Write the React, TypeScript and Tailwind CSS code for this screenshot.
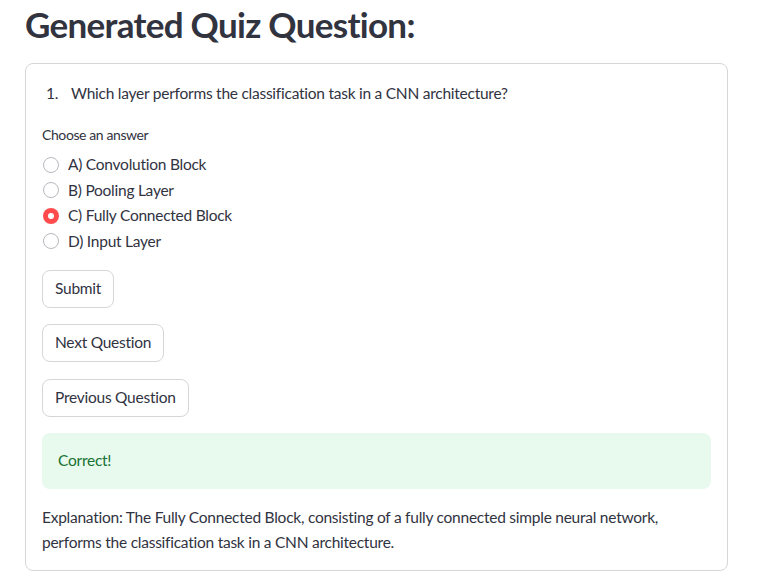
import React from "react";

const options = [
  "A) Convolution Block",
  "B) Pooling Layer",
  "C) Fully Connected Block",
  "D) Input Layer",
];

function Radio({ checked }: { checked: boolean }) {
  if (checked) {
    return (
      <span className="flex h-4 w-4 items-center justify-center rounded-full bg-[#ff4b4b]">
        <span className="h-[6px] w-[6px] rounded-full bg-white" />
      </span>
    );
  }
  return <span className="h-4 w-4 rounded-full border border-[#b8b9be] bg-white" />;
}

function Btn({ children }: { children: React.ReactNode }) {
  return (
    <button className="flex h-[38px] items-center rounded-lg border border-[#d6d6d9] bg-white px-3 text-[15.5px] tracking-[-0.25px] text-[#31333f]">
      {children}
    </button>
  );
}

export default function App() {
  return (
    <div
      className="min-h-[582px] w-[776px] bg-white text-[#31333f]"
      style={{ fontFamily: "Lato, 'Noto Sans', sans-serif" }}
    >
      <div className="pl-[25px] pr-[48px] pt-[1px]">
        <h1 className="h-[62px] text-[35px] font-bold leading-[46px] tracking-[-0.7px]">
          Generated Quiz Question:
        </h1>
        <div className="rounded-lg border border-[#d6d6d9] px-[16px] pb-[15px] pt-[17px]">
          <div className="flex text-[15.5px] leading-[24px] tracking-[-0.25px]">
            <span className="w-[29px] pl-[4px]">1.</span>
            <span>Which layer performs the classification task in a CNN architecture?</span>
          </div>
          <div className="mt-[20px] text-[14px] leading-[20px] tracking-[-0.4px]">Choose an answer</div>
          <div className="mt-[7px] flex flex-col">
            {options.map((o, i) => (
              <label
                key={o}
                className="flex h-[25.5px] items-center gap-[9px] pl-[1px] text-[15.5px] tracking-[-0.25px]"
              >
                <Radio checked={i === 2} />
                <span>{o}</span>
              </label>
            ))}
          </div>
          <div className="mt-[15.5px] flex flex-col items-start gap-[16.5px]">
            <Btn>Submit</Btn>
            <Btn>Next Question</Btn>
            <Btn>Previous Question</Btn>
          </div>
          <div className="mt-[16.5px] flex h-[56px] items-center rounded-lg bg-[#e8f9ee] px-[16px] text-[15.5px] tracking-[-0.25px] text-[#177233]">
            Correct!
          </div>
          <p className="mt-[16px] text-[15.5px] leading-[25px] tracking-[-0.25px]">
            Explanation: The Fully Connected Block, consisting of a fully connected simple neural network,
            performs the classification task in a CNN architecture.
          </p>
        </div>
      </div>
    </div>
  );
}
